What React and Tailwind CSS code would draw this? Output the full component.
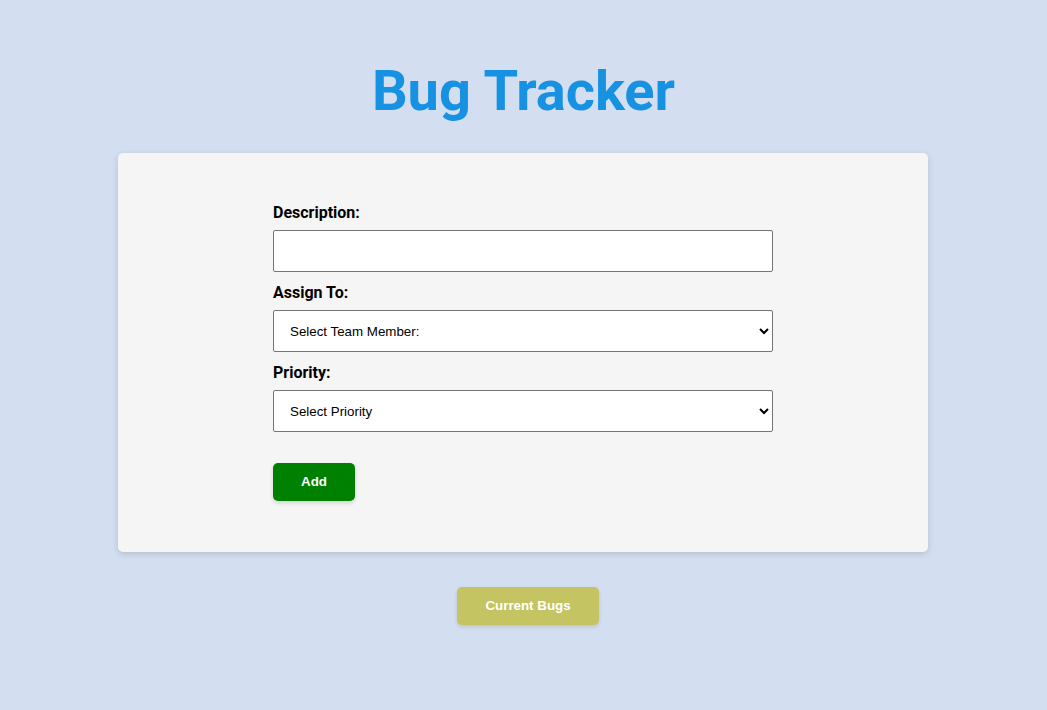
import React from "react";

export default function App() {
  return (
    <div className="min-h-[710px] w-full bg-[#d3dff0] flex flex-col items-center pt-[58px]" style={{ fontFamily: "Roboto, 'Liberation Sans', sans-serif" }}>
      <h1 className="text-[56px] font-bold text-[#1791e2] leading-[normal] m-0" style={{ fontFamily: "Roboto, sans-serif" }}>Bug Tracker</h1>
      <div className="mt-[29px] mr-[1px] w-[810px] bg-[#f5f5f5] rounded-[5px] shadow-[0_2px_6px_rgba(0,0,0,0.15)] pt-[50px] pb-[51px] flex justify-center">
        <form className="w-[500px] flex flex-col" onSubmit={(e) => e.preventDefault()}>
          <label className="text-[16px] font-bold text-black leading-[normal] mb-[8px]">Description:</label>
          <input type="text" className="h-[42px] w-full bg-white border border-[#767676] rounded-[2px] px-3 text-[13.33px] outline-none mb-[11px]" />
          <label className="text-[16px] font-bold text-black leading-[normal] mb-[8px]">Assign To:</label>
          <select className="h-[42px] w-full bg-white border border-[#767676] rounded-[2px] pl-[12px] pr-1 text-[13.33px] text-black mb-[11px]" style={{ fontFamily: "'Liberation Sans', Arial, sans-serif" }} defaultValue="">
            <option value="">Select Team Member:</option>
          </select>
          <label className="text-[16px] font-bold text-black leading-[normal] mb-[8px]">Priority:</label>
          <select className="h-[42px] w-full bg-white border border-[#767676] rounded-[2px] pl-[12px] pr-1 text-[13.33px] text-black" style={{ fontFamily: "'Liberation Sans', Arial, sans-serif" }} defaultValue="">
            <option value="">Select Priority</option>
          </select>
          <div className="mt-[31px]">
            <button type="submit" className="w-[82px] h-[38px] bg-[#008000] text-white font-bold text-[13.33px] rounded-[5px] shadow-[0_2px_4px_rgba(0,0,0,0.15)]" style={{ fontFamily: "'Liberation Sans', Arial, sans-serif" }}>Add</button>
          </div>
        </form>
      </div>
      <button className="mt-[35px] ml-[9px] w-[142px] h-[38px] bg-[#c4c462] text-white font-bold text-[13.33px] rounded-[5px] shadow-[0_2px_4px_rgba(0,0,0,0.12)]" style={{ fontFamily: "'Liberation Sans', Arial, sans-serif" }}>Current Bugs</button>
    </div>
  );
}
